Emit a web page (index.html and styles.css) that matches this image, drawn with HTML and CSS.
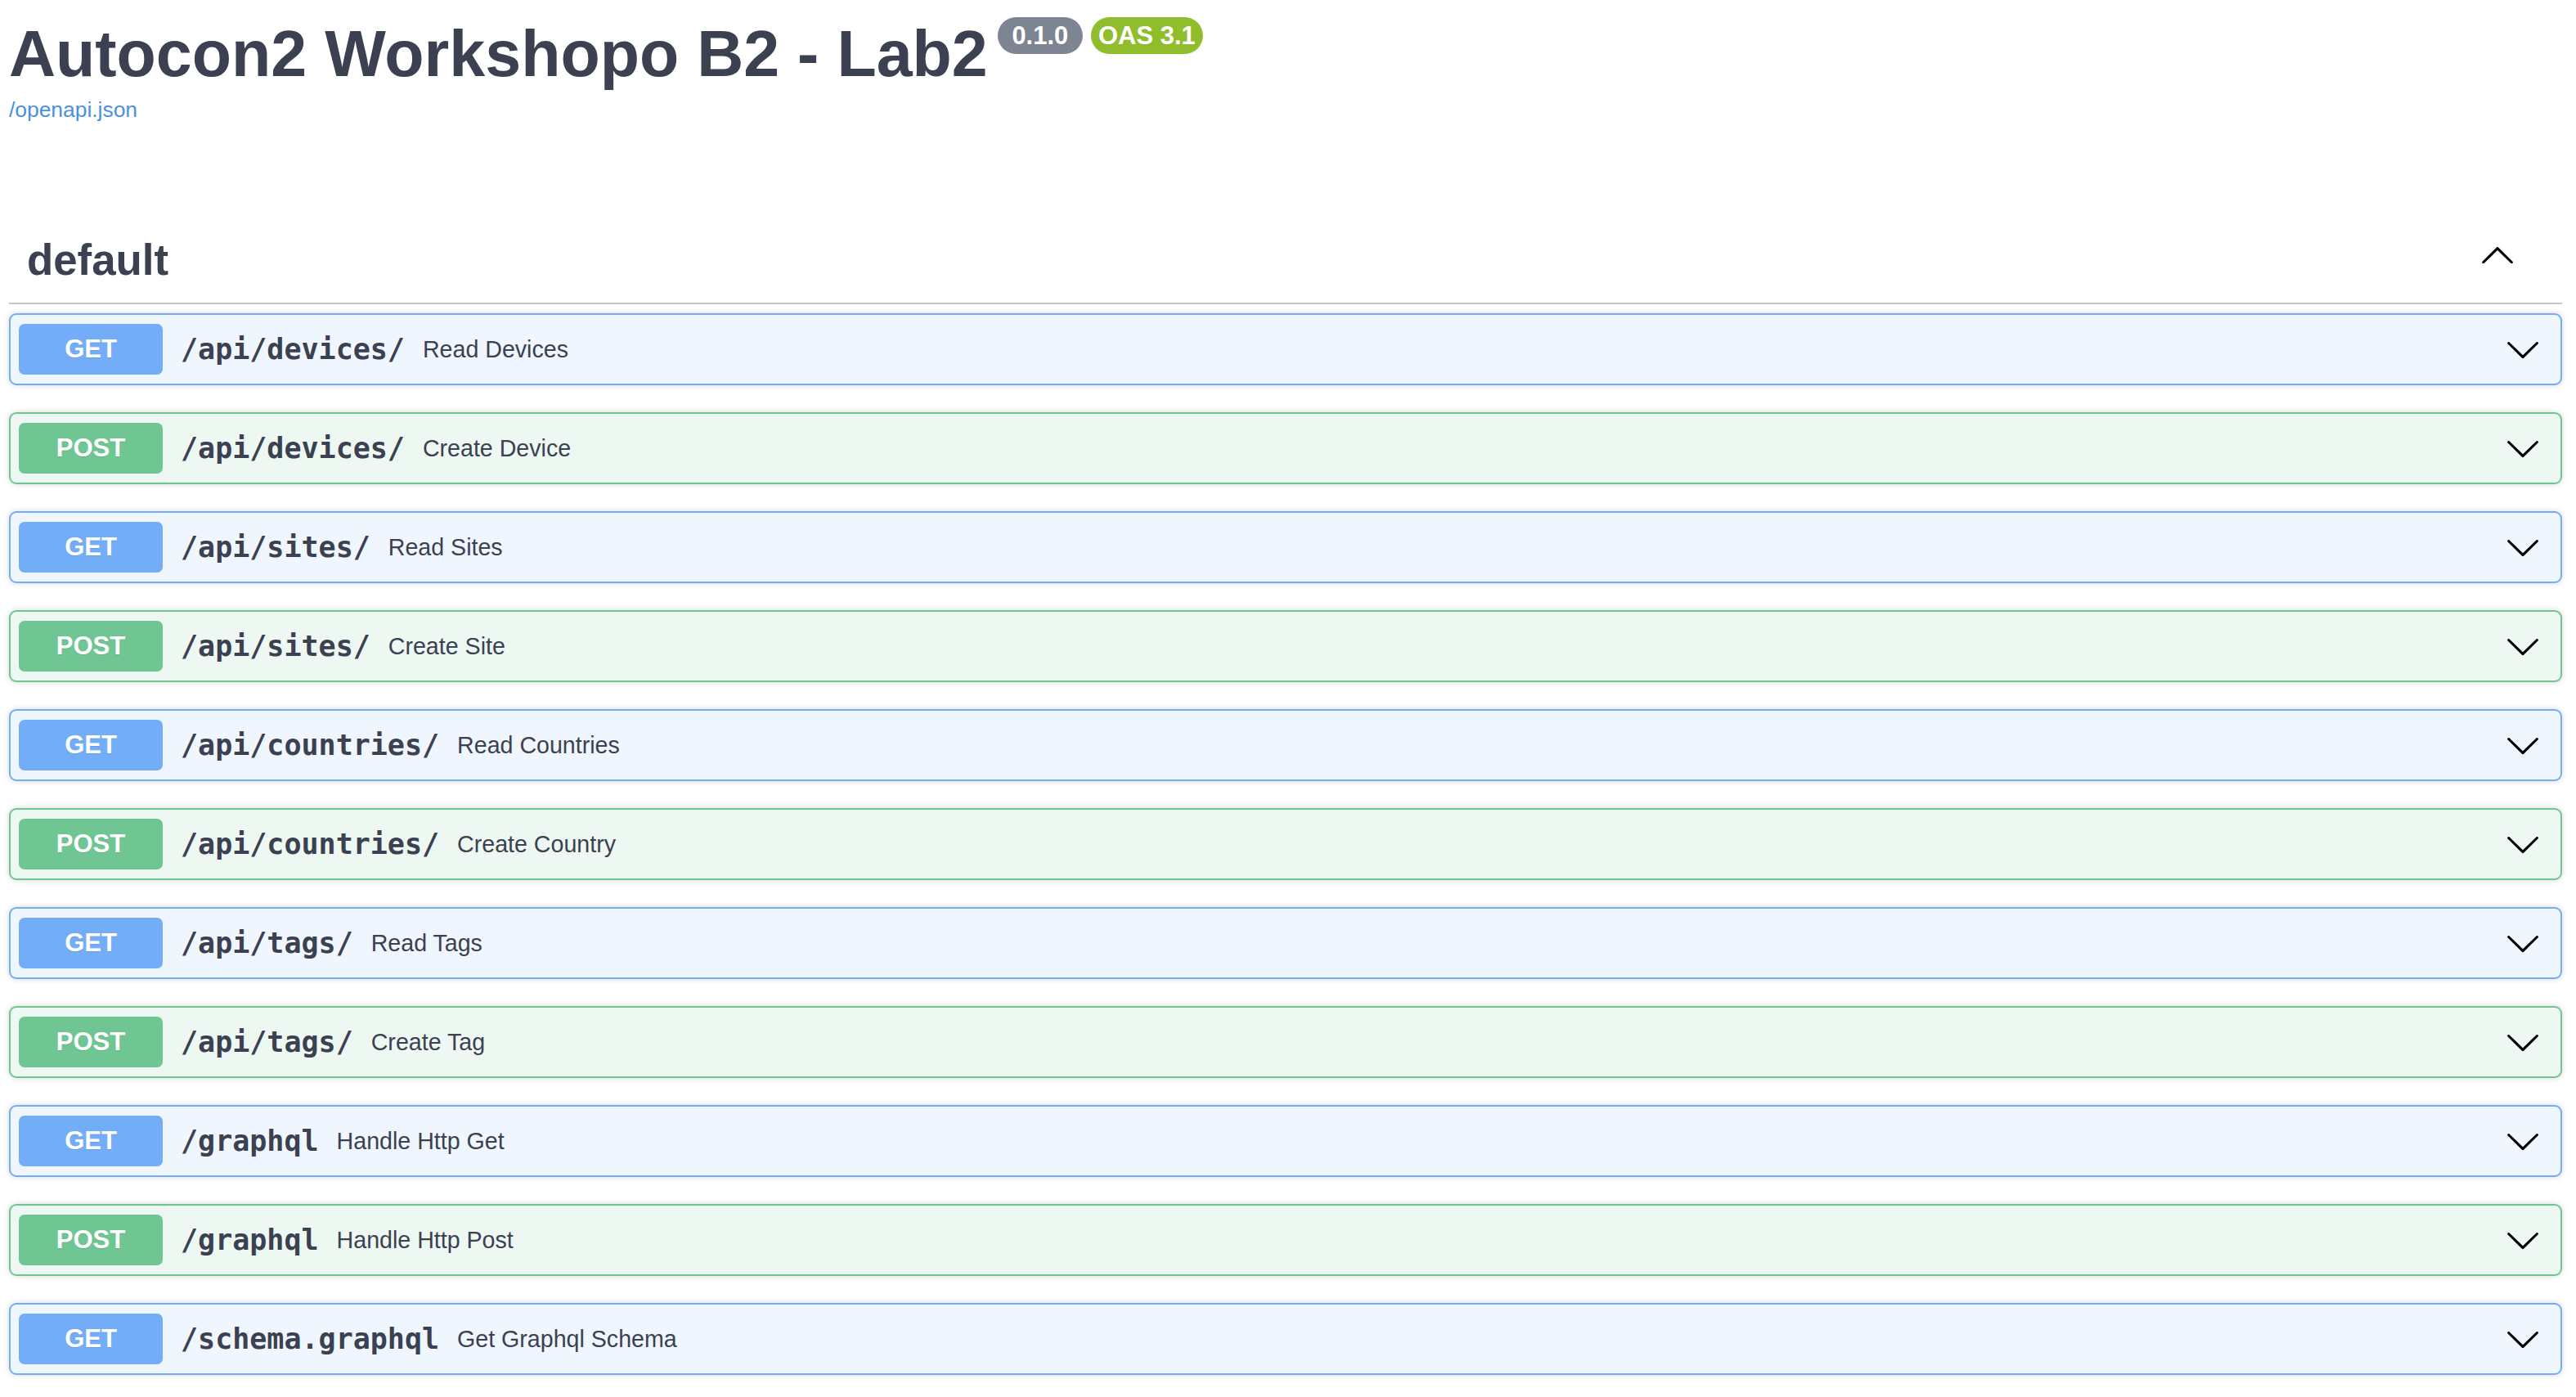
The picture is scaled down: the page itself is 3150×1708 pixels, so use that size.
FILE: index.html
```html
<!DOCTYPE html>
<html lang="en">
<head>
<meta charset="utf-8">
<title>Autocon2 Workshopo B2 - Lab2</title>
<link rel="stylesheet" href="styles.css">
</head>
<body>
<svg class="defs" width="0" height="0" aria-hidden="true">
  <defs>
    <symbol id="arrow-down" viewBox="0 0 20 20"><path d="M17.418 6.109c.272-.268.709-.268.979 0s.271.701 0 .969l-7.908 7.83c-.27.268-.707.268-.979 0l-7.908-7.830c-.27-.268-.27-.701 0-.969.271-.268.709-.268.979 0L10 13.25l7.418-7.141z"/></symbol>
    <symbol id="arrow-up" viewBox="0 0 20 20"><path d="M17.418 14.908c.272.268.709.268.979 0s.271-.701 0-.969l-7.908-7.83c-.27-.268-.707-.268-.979 0l-7.908 7.83c-.27.268-.27.701 0 .969.271.268.709.268.979 0L10 7.767l7.418 7.141z"/></symbol>
  </defs>
</svg>
<div class="page">
  <div class="info">
    <h2 class="title">
      <span class="title-text">Autocon2 Workshopo B2 - Lab2</span>
      <span class="stamp version"> 0.1.0 </span>
      <span class="stamp oas">OAS 3.1</span>
    </h2>
    <a class="link" href="#">/openapi.json</a>
  </div>

  <section class="tag-section">
    <h3 class="tag">
      <span class="tag-name">default</span>
      <svg class="arrow-up" width="44" height="44"><use href="#arrow-up"/></svg>
    </h3>

    <div class="opblock get"><div class="summary"><span class="method">GET</span><span class="path">/api/devices/</span><span class="desc">Read Devices</span><svg class="arrow" width="44" height="44"><use href="#arrow-down"/></svg></div></div>
    <div class="opblock post"><div class="summary"><span class="method">POST</span><span class="path">/api/devices/</span><span class="desc">Create Device</span><svg class="arrow" width="44" height="44"><use href="#arrow-down"/></svg></div></div>
    <div class="opblock get"><div class="summary"><span class="method">GET</span><span class="path">/api/sites/</span><span class="desc">Read Sites</span><svg class="arrow" width="44" height="44"><use href="#arrow-down"/></svg></div></div>
    <div class="opblock post"><div class="summary"><span class="method">POST</span><span class="path">/api/sites/</span><span class="desc">Create Site</span><svg class="arrow" width="44" height="44"><use href="#arrow-down"/></svg></div></div>
    <div class="opblock get"><div class="summary"><span class="method">GET</span><span class="path">/api/countries/</span><span class="desc">Read Countries</span><svg class="arrow" width="44" height="44"><use href="#arrow-down"/></svg></div></div>
    <div class="opblock post"><div class="summary"><span class="method">POST</span><span class="path">/api/countries/</span><span class="desc">Create Country</span><svg class="arrow" width="44" height="44"><use href="#arrow-down"/></svg></div></div>
    <div class="opblock get"><div class="summary"><span class="method">GET</span><span class="path">/api/tags/</span><span class="desc">Read Tags</span><svg class="arrow" width="44" height="44"><use href="#arrow-down"/></svg></div></div>
    <div class="opblock post"><div class="summary"><span class="method">POST</span><span class="path">/api/tags/</span><span class="desc">Create Tag</span><svg class="arrow" width="44" height="44"><use href="#arrow-down"/></svg></div></div>
    <div class="opblock get"><div class="summary"><span class="method">GET</span><span class="path">/graphql</span><span class="desc">Handle Http Get</span><svg class="arrow" width="44" height="44"><use href="#arrow-down"/></svg></div></div>
    <div class="opblock post"><div class="summary"><span class="method">POST</span><span class="path">/graphql</span><span class="desc">Handle Http Post</span><svg class="arrow" width="44" height="44"><use href="#arrow-down"/></svg></div></div>
    <div class="opblock get"><div class="summary"><span class="method">GET</span><span class="path">/schema.graphql</span><span class="desc">Get Graphql Schema</span><svg class="arrow" width="44" height="44"><use href="#arrow-down"/></svg></div></div>
  </section>
</div>
</body>
</html>
```

FILE: styles.css
```css
html, body {
  margin: 0;
  padding: 0;
  background: #ffffff;
}

body {
  font-family: "Liberation Sans", Arial, sans-serif;
  color: #3b4151;
}

.defs {
  position: absolute;
  width: 0;
  height: 0;
  overflow: hidden;
}

.page {
  padding: 20px 17px 0 11px;
}

.info {
  display: flex;
  flex-direction: column;
  align-items: flex-start;
}

.title {
  display: flex;
  align-items: flex-start;
  margin: 0;
  font-size: 79px;
  line-height: 91px;
  font-weight: 700;
  color: #3b4151;
}

.stamp {
  margin-top: 1px;
  padding: 6px 9px;
  border-radius: 60px;
  font-family: "Liberation Sans", Arial, sans-serif;
  font-size: 31px;
  line-height: 33px;
  font-weight: 700;
  color: #ffffff;
  white-space: pre;
}

.version {
  margin-left: 12px;
  background: #7d8492;
}

.oas {
  margin-left: 10px;
  background: #8fbd2c;
}

.link {
  margin-top: 8px;
  font-size: 26.4px;
  line-height: 30px;
  color: #4990e2;
  text-decoration: none;
}

.tag-section {
  margin-top: 116px;
}

.tag {
  display: flex;
  align-items: center;
  margin: 0 0 11px;
  padding: 22px 13px 22px 22px;
  border-bottom: 2px solid #c4c6cb;
  font-size: 52.8px;
  line-height: 61px;
  font-weight: 700;
  color: #3b4151;
}

.tag-name {
  flex: 1;
}

.arrow-up {
  margin-right: 44px;
  margin-bottom: 13px;
  fill: #000000;
}

.opblock {
  margin-bottom: 33px;
  border: 2px solid;
  border-radius: 9px;
  box-shadow: 0 0 7px rgba(0, 0, 0, 0.17);
}

.opblock.get {
  border-color: #73adf7;
  background: #eff6fe;
}

.opblock.post {
  border-color: #6fc693;
  background: #eef8f3;
}

.summary {
  display: flex;
  align-items: center;
  padding: 11px 11px 11px 10px;
}

.method {
  min-width: 176px;
  padding: 13px 0;
  border-radius: 7px;
  font-size: 31px;
  line-height: 36px;
  font-weight: 700;
  text-align: center;
  color: #ffffff;
  text-shadow: 0 1px 0 rgba(0, 0, 0, 0.1);
}

.get .method {
  background: #73adf7;
}

.post .method {
  background: #6fc693;
}

.path {
  padding: 0 22px;
  font-family: "DejaVu Sans Mono", "Liberation Mono", monospace;
  font-size: 35px;
  font-weight: 700;
  color: #3b4151;
}

.desc {
  flex: 1;
  font-size: 28.6px;
  color: #3b4151;
}

.arrow {
  margin-right: 13px;
  fill: #000000;
}
```
